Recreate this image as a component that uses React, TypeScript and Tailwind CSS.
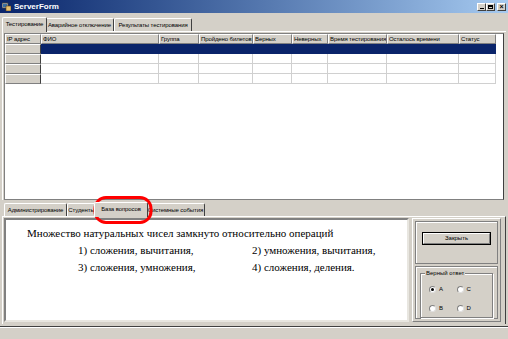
import clsx from "clsx";

const columns = [
  "IP адрес",
  "ФИО",
  "Группа",
  "Пройдено билетов",
  "Верных",
  "Неверных",
  "Время тестирования",
  "Осталось времени",
  "Статус",
];

const gridCols =
  "grid grid-cols-[36px_118px_40px_54px_39px_36px_59px_72px_37px]";

function Tab({ label, w, active }: { label: string; w: number; active?: boolean }) {
  return (
    <div
      style={{ width: w }}
      className={clsx(
        "flex items-center justify-center whitespace-nowrap overflow-hidden border-t border-l border-r border-t-white border-l-white border-r-[#404040] rounded-t-[2px] text-[6px] tracking-[-0.1px] text-black bg-[#d4d0c8]",
        active ? "h-[15px] relative z-10 -mb-px -mx-[2px] pb-px" : "h-[13px]"
      )}
    >
      {label}
    </div>
  );
}

function Radio({ label, checked }: { label: string; checked?: boolean }) {
  return (
    <div className="flex items-center gap-[3px] text-[6px]">
      <span className="w-[7px] h-[7px] rounded-full bg-white border border-t-[#808080] border-l-[#808080] border-b-[#e0e0e0] border-r-[#e0e0e0] flex items-center justify-center">
        {checked && <span className="w-[3px] h-[3px] rounded-full bg-black" />}
      </span>
      {label}
    </div>
  );
}

function WinBtn({ children }: { children: React.ReactNode }) {
  return (
    <div className="w-[9px] h-[8px] bg-[#d4d0c8] border border-t-white border-l-white border-b-[#404040] border-r-[#404040] flex items-center justify-center">
      {children}
    </div>
  );
}

export default function App() {
  return (
    <div
      className="relative w-[508px] h-[339px] overflow-hidden bg-[#d4d0c8] flex flex-col text-black"
      style={{ fontFamily: '"Liberation Sans", Arial, sans-serif' }}
    >
      {/* Title bar */}
      <div className="h-[13px] flex items-center px-[2px] bg-gradient-to-r from-[#0a246a] to-[#a6caf0]">
        <svg width="9" height="9" viewBox="0 0 9 9" className="mr-[3px]">
          <rect x="0" y="1" width="6" height="5" fill="#c0c0c0" stroke="#404040" strokeWidth="0.8" />
          <rect x="1" y="2" width="4" height="3" fill="#3a6ea5" />
          <rect x="4" y="4" width="5" height="5" fill="#e8c070" stroke="#604010" strokeWidth="0.6" />
        </svg>
        <span className="text-[8px] font-bold text-white">ServerForm</span>
        <div className="ml-auto flex items-center">
          <WinBtn>
            <span className="w-[4px] h-[1px] bg-black mt-[3px]" />
          </WinBtn>
          <WinBtn>
            <span className="w-[5px] h-[4px] border border-black border-t-2" />
          </WinBtn>
          <div className="w-[2px]" />
          <WinBtn>
            <span className="text-[7px] leading-none font-bold">×</span>
          </WinBtn>
        </div>
      </div>

      {/* Top tabs */}
      <div className="mt-[3px] h-[15px] flex items-end pl-[4px]">
        <Tab label="Тестирование" w={45} active />
        <Tab label="Аварийное отключение" w={69} />
        <Tab label="Результаты тестирования" w={78} />
      </div>

      {/* Grid */}
      <div className="mx-[2px] h-[169px] border-l border-t border-white flex">
        <div className="ml-[1px] mr-[2px] mt-px flex-1 bg-white border border-t-[#808080] border-l-[#808080] border-b-[#808080] border-r-[#404040] overflow-hidden">
          <div className={gridCols}>
            {columns.map((c) => (
              <div
                key={c}
                className="h-[10px] bg-[#d4d0c8] border-t border-l border-t-white border-l-white border-r border-b border-r-[#808080] border-b-[#808080] text-[6px] tracking-[-0.1px] leading-[8px] pl-px whitespace-nowrap overflow-hidden"
              >
                {c}
              </div>
            ))}
            {[0, 1, 2, 3].map((r) =>
              columns.map((c, i) =>
                i === 0 ? (
                  <div
                    key={r + c}
                    className="h-[10px] bg-[#d4d0c8] border-t border-l border-t-white border-l-white border-r border-b border-r-[#404040] border-b-[#808080]"
                  />
                ) : (
                  <div
                    key={r + c}
                    className={clsx(
                      "h-[10px] border-r border-b",
                      r === 0
                        ? "bg-[#0a246a] border-[#0a246a]"
                        : "bg-white border-[#d0d0d0]"
                    )}
                  />
                )
              )
            )}
          </div>
        </div>
      </div>

      {/* Lower tabs */}
      <div className="mt-[2px] h-[14px] flex items-end pl-[4px]">
        <Tab label="Администрирование" w={63} />
        <Tab label="Студенты" w={29} />
        <Tab label="База вопросов" w={54} active />
        <Tab label="Системные события" w={59} />
      </div>

      {/* Lower content */}
      <div className="h-[108px] mx-[2px] border-l border-t border-white border-r border-r-[#404040] flex gap-[3px] pt-px pl-px pr-[4px] pb-[2px]">
        <div
          className="w-[405px] bg-white border-2 border-t-[#808080] border-l-[#808080] border-b-[#e8e6e0] border-r-[#e8e6e0] pt-[5px] text-[11px] leading-[17px]"
          style={{ fontFamily: '"Liberation Serif", "Times New Roman", serif' }}
        >
          <div className="pl-[21px]">Множество натуральных чисел замкнуто относительно операций</div>
          <div className="grid grid-cols-[174px_1fr] pl-[72px]">
            <div>1) сложения, вычитания,</div>
            <div>2) умножения, вычитания,</div>
            <div>3) сложения, умножения,</div>
            <div>4) сложения, деления.</div>
          </div>
        </div>
        <div className="flex-1 border border-t-white border-l-white border-b-[#808080] border-r-[#808080] p-[2px] flex flex-col">
          <div className="h-[46px] border border-[#808080] shadow-[inset_1px_1px_0_#fff] flex justify-center pt-[10px]">
            <div className="w-[69px] h-[13px] border border-black flex">
              <div className="flex-1 border border-t-white border-l-white border-b-[#808080] border-r-[#808080] text-[6px] flex items-center justify-center">
                Закрыть
              </div>
            </div>
          </div>
          <div className="flex-1 mt-[2px] border border-[#808080] shadow-[inset_1px_1px_0_#fff] px-[4px] pt-[6px]">
            <div className="relative h-[45px] border border-[#808080] shadow-[inset_1px_1px_0_#fff,1px_1px_0_#fff] px-[8px] pt-[11px]">
              <span className="absolute -top-[5px] left-[4px] bg-[#d4d0c8] px-px text-[6px] leading-[9px]">
                Верный ответ
              </span>
              <div className="grid grid-cols-2 gap-y-[10px]">
                <Radio label="A" checked />
                <Radio label="C" />
                <Radio label="B" />
                <Radio label="D" />
              </div>
            </div>
          </div>
        </div>
      </div>

      {/* Status */}
      <div className="h-[3px] border-b border-[#404040]" />
      <div className="flex-1 border-t border-white" />

      {/* Red highlight annotation */}
      <svg className="absolute left-[92px] top-[195px]" width="62" height="30" viewBox="0 0 62 30">
        <rect x="3" y="2.5" width="56" height="25" rx="11" fill="none" stroke="#ff0000" strokeWidth="3" />
      </svg>
    </div>
  );
}
